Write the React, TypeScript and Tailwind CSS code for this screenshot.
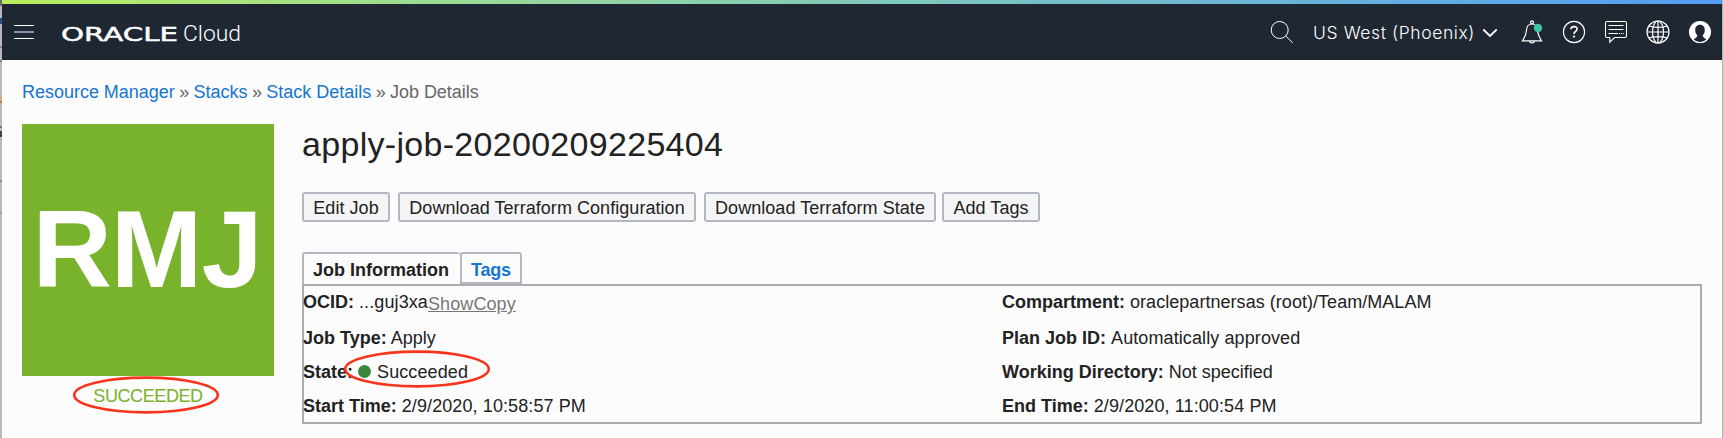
import type { ReactNode } from "react";

function MenuIcon() {
  return (
    <svg width="20" height="16" viewBox="0 0 20 16" className="block">
      <path d="M0 1.5H20M0 14.5H20" stroke="#fff" strokeWidth="1" />
      <path d="M0 8H20" stroke="#8d9298" strokeWidth="2" />
    </svg>
  );
}

function OracleLogo() {
  return (
    <svg width="182" height="28" viewBox="0 0 182 28" className="block" fill="#fff">
      <text x="-1" y="23" fontFamily="DejaVu Sans" fontSize="20" textLength="117" lengthAdjust="spacingAndGlyphs" stroke="#fff" strokeWidth="0.5">
        ORACLE
      </text>
      <text x="121" y="23" fontFamily="Roboto" fontWeight="300" fontSize="22.5" textLength="58" lengthAdjust="spacingAndGlyphs">
        Cloud
      </text>
    </svg>
  );
}

function SearchIcon() {
  return (
    <svg width="24" height="24" viewBox="0 0 24 24" className="block" fill="none" stroke="#fff" strokeWidth="1">
      <circle cx="9.7" cy="10" r="8.5" />
      <path d="M15.8 16.1L22.7 22.8" />
    </svg>
  );
}

function ChevronIcon() {
  return (
    <svg width="16" height="10" viewBox="0 0 16 10" className="block" fill="none" stroke="#fff" strokeWidth="1.8">
      <path d="M1.3 1.5L8 8L14.7 1.5" />
    </svg>
  );
}

function BellIcon() {
  return (
    <svg width="24" height="26" viewBox="0 0 24 26" className="block" fill="none" stroke="#fff" strokeWidth="1.2">
      <circle cx="12" cy="3.3" r="1.5" />
      <path d="M12 5C8.4 5 6.7 7.6 6.5 11C6.3 15.5 4.8 18.2 2.4 21.8H21.6C19.2 18.2 17.7 15.5 17.5 11C17.3 7.6 15.6 5 12 5Z" />
      <path d="M9.5 22C9.8 24.6 14.2 24.6 14.5 22" />
      <circle cx="18" cy="9" r="4.2" fill="#3fc3a2" stroke="none" />
    </svg>
  );
}

function HelpIcon() {
  return (
    <svg width="24" height="24" viewBox="0 0 24 24" className="block" fill="none" stroke="#fff">
      <circle cx="12" cy="12" r="10.6" strokeWidth="1.1" />
      <path d="M8.9 9.3C9 5.8 15.1 5.8 15.1 9C15.1 11.3 12 11.4 12 14" strokeWidth="1.6" />
      <circle cx="12" cy="16.6" r="1.1" fill="#fff" stroke="none" />
    </svg>
  );
}

function ChatIcon() {
  return (
    <svg width="24" height="24" viewBox="0 0 24 24" className="block" fill="none" stroke="#fff" strokeWidth="1.1">
      <path d="M3 1.5H21Q22.5 1.5 22.5 3V16Q22.5 17.5 21 17.5H10.5L5.8 22.2V17.5H3Q1.5 17.5 1.5 16V3Q1.5 1.5 3 1.5Z" />
      <path d="M4.5 5.5H19.5M4.5 9.5H19.5" />
      <path d="M4.5 13.5H14M15 13.5H16.2M17 13.5H18M18.8 13.5H19.8" />
    </svg>
  );
}

function GlobeIcon() {
  return (
    <svg width="26" height="26" viewBox="0 0 26 26" className="block" fill="none" stroke="#fff" strokeWidth="1.2">
      <circle cx="13" cy="13" r="11" />
      <ellipse cx="13" cy="13" rx="5.5" ry="11" />
      <path d="M13 2V24M2 13H24M4 7C8 8.8 18 8.8 22 7M4 19C8 17.2 18 17.2 22 19" />
    </svg>
  );
}

function UserIcon() {
  return (
    <svg width="24" height="24" viewBox="0 0 24 24" className="block">
      <circle cx="12" cy="12" r="11" fill="#fff" />
      <path d="M12 4.8C9 4.8 7.2 7 7.2 10C7.2 12.2 8 14.2 9.4 15.4C9.2 17 7.6 17.8 5.6 19.6C7.4 21.2 9.6 22 12 22C14.4 22 16.6 21.2 18.4 19.6C16.4 17.8 14.8 17 14.6 15.4C16 14.2 16.8 12.2 16.8 10C16.8 7 15 4.8 12 4.8Z" fill="#1e2732" />
      <path d="M4.6 19.6C8 23.6 16 23.6 19.4 19.6" stroke="#fff" strokeWidth="1" fill="none" />
    </svg>
  );
}

function ActionButton({ className, children }: { className: string; children: ReactNode }) {
  return (
    <button className={`h-[30px] shrink-0 rounded-[3px] border-2 border-[#b2b9c5] bg-[#f5f5f6] pt-px text-center leading-[27px] tracking-[0.05px] whitespace-nowrap ${className}`}>
      {children}
    </button>
  );
}

function Field({ label, className, children }: { label: string; className?: string; children: ReactNode }) {
  return (
    <div className={`h-[34px] leading-[34px] whitespace-nowrap ${className ?? ""}`}>
      <b>{label}:</b> {children}
    </div>
  );
}

function RedMark({ className }: { className: string }) {
  return (
    <svg width="148" height="40" viewBox="0 0 148 40" className={`pointer-events-none absolute ${className}`} fill="none">
      <ellipse cx="74" cy="20" rx="71.8" ry="17.4" stroke="#f8341c" strokeWidth="2.6" />
    </svg>
  );
}

const firstRow = "h-[35px]! leading-[32px]!";

export default function App() {
  return (
    <div className="flex h-[438px] w-[1723px] overflow-hidden bg-[#fcfcfc] font-['Liberation_Sans',Arial,sans-serif] text-[18px] text-[#222]">
      <div className="flex w-[2px] shrink-0 flex-col bg-[#b9b9b9]">
        <div className="h-[6px] bg-[#6f6a6a]" />
        <div className="mt-[12px] h-[6px] bg-[#24508c]" />
        <div className="mt-[22px] h-[2px] bg-[#858585]" />
        <div className="mt-[12px] h-[2px] bg-[#8a7f7f]" />
        <div className="mt-[34px] h-[5px] bg-[#cfae86]" />
        <div className="h-[2px] bg-[#bd7040]" />
        <div className="mt-[23px] h-[2px] bg-[#777]" />
        <div className="mt-[3px] h-[6px] bg-[#444]" />
        <div className="mt-[43px] h-[2px] bg-[#8f8f8f]" />
        <div className="mt-[30px] h-[2px] bg-[#a0a0a0]" />
      </div>

      <div className="flex w-[1720px] shrink-0 flex-col">
        <div className="h-[4px] shrink-0 bg-linear-to-r from-[#b7ee58] to-[#549bf5]" />
        <header className="flex h-[56px] shrink-0 items-center bg-[#1e2732] pl-[12px] text-white">
          <MenuIcon />
          <div className="ml-[28px]">
            <OracleLogo />
          </div>
          <div className="ml-auto flex items-center pr-[10px]">
            <SearchIcon />
            <span className="ml-[19px] w-[164px] pt-[3px] font-['Inter',sans-serif] text-[17.5px] font-[350] tracking-[0.6px] whitespace-nowrap">US West (Phoenix)</span>
            <div className="ml-[5px] pt-[2px]">
              <ChevronIcon />
            </div>
            <div className="ml-[22px]">
              <BellIcon />
            </div>
            <div className="ml-[18px]">
              <HelpIcon />
            </div>
            <div className="ml-[18px]">
              <ChatIcon />
            </div>
            <div className="ml-[17px]">
              <GlobeIcon />
            </div>
            <div className="ml-[17px]">
              <UserIcon />
            </div>
          </div>
        </header>

        <nav className="mt-[20px] h-[24px] shrink-0 pl-[20px] leading-[24px] tracking-[-0.02px] whitespace-nowrap text-[#666]">
          <a className="text-[#1675cf]">Resource Manager</a>
          <span className="tracking-[-0.4px]"> » </span>
          <a className="text-[#1675cf]">Stacks</a>
          <span className="tracking-[-0.4px]"> » </span>
          <a className="text-[#1675cf]">Stack Details</a>
          <span className="tracking-[-0.4px]"> » </span>
          Job Details
        </nav>

        <main className="mt-[20px] flex pl-[20px]">
          <aside className="relative w-[252px] shrink-0">
            <div className="h-[252px] bg-[#79b22b] pt-[62px] pr-[2px] text-center text-[110px] leading-[126px] font-bold tracking-[-1px] text-white">RMJ</div>
            <div className="pt-[8px] text-center leading-[24px] tracking-[-0.4px] text-[#79b22b]">SUCCEEDED</div>
            <RedMark className="top-[251px] left-[50px]" />
          </aside>

          <section className="ml-[28px] w-[1400px] shrink-0">
            <h1 className="h-[40px] text-[34px] leading-[40px] tracking-[0.3px] whitespace-nowrap">apply-job-20200209225404</h1>
            <div className="mt-[28px] flex">
              <ActionButton className="w-[88px]">Edit Job</ActionButton>
              <ActionButton className="ml-[8px] w-[298px]">Download Terraform Configuration</ActionButton>
              <ActionButton className="ml-[8px] w-[232px]">Download Terraform State</ActionButton>
              <ActionButton className="ml-[6px] w-[98px]">Add Tags</ActionButton>
            </div>

            <div className="mt-[30px] flex h-[32px] font-bold">
              <div className="h-[32px] w-[158px] rounded-t-[3px] border-2 border-r-0 border-b-0 border-[#b2b9c5] pr-[2px] text-center leading-[32px]">Job Information</div>
              <div className="h-[32px] w-[62px] rounded-t-[3px] border-2 border-[#b2b9c5] text-center leading-[32px] tracking-[-0.2px] text-[#1675cf]">Tags</div>
            </div>

            <div className="relative flex h-[140px] border-2 border-[#acacac]">
              <div className="-ml-px w-[699px]">
                <Field label="OCID" className={firstRow}>
                  <span className="tracking-[0.1px]">
                    ...guj3xa<a className="relative top-[2px] text-[#777] underline">ShowCopy</a>
                  </span>
                </Field>
                <Field label="Job Type">Apply</Field>
                <Field label="State">
                  <span className="mr-[6px] inline-block h-[13px] w-[13px] rounded-full bg-[#3b873e]" />
                  <span className="tracking-[0.1px]">Succeeded</span>
                </Field>
                <Field label="Start Time">
                  <span className="tracking-[0.1px]">2/9/2020, 10:58:57 PM</span>
                </Field>
              </div>
              <div>
                <Field label="Compartment" className={firstRow}>
                  <span className="tracking-[0.04px]">oraclepartnersas (root)/Team/MALAM</span>
                </Field>
                <Field label="Plan Job ID">
                  <span className="tracking-[0.1px]">Automatically approved</span>
                </Field>
                <Field label="Working Directory">Not specified</Field>
                <Field label="End Time">
                  <span className="tracking-[0.1px]">2/9/2020, 11:00:54 PM</span>
                </Field>
              </div>
              <RedMark className="top-[63px] left-[39px]" />
            </div>
          </section>
        </main>
      </div>
      <div className="w-px shrink-0 bg-[#b0b0b0]" />
    </div>
  );
}
